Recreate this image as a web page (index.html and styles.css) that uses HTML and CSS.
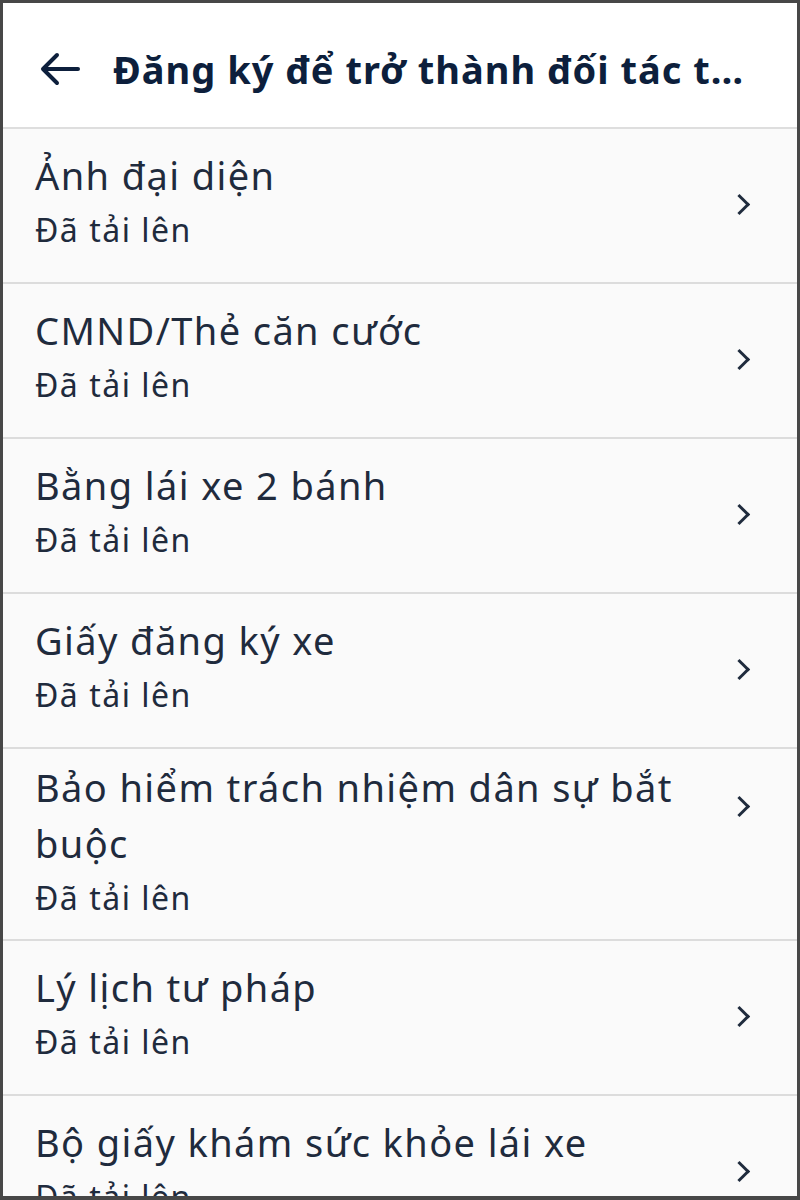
FILE: index.html
```html
<!DOCTYPE html>
<html lang="vi">
<head>
  <meta charset="UTF-8">
  <meta name="viewport" content="width=device-width, initial-scale=1.0">
  <title>Đăng ký đối tác</title>
  <link rel="stylesheet" href="styles.css">
</head>
<body>
  <div class="screen">
    <!-- Top bar -->
    <header class="topbar">
      <svg class="back" width="40" height="34" viewBox="0 0 40 34" fill="none" stroke="#0d1f3c" stroke-width="4" stroke-linecap="round" stroke-linejoin="round">
        <path d="M38 17H4"/>
        <path d="M17 3L3 17l14 14"/>
      </svg>
      <h1 class="title">Đăng ký để trở thành đối tác tài xế</h1>
    </header>

    <!-- Document list -->
    <ul class="doc-list">
      <li class="doc">
        <div class="doc-text">
          <div class="doc-name">Ảnh đại diện</div>
          <div class="doc-status">Đã tải lên</div>
        </div>
        <span class="chevron"></span>
      </li>
      <li class="doc">
        <div class="doc-text">
          <div class="doc-name">CMND/Thẻ căn cước</div>
          <div class="doc-status">Đã tải lên</div>
        </div>
        <span class="chevron"></span>
      </li>
      <li class="doc">
        <div class="doc-text">
          <div class="doc-name">Bằng lái xe 2 bánh</div>
          <div class="doc-status">Đã tải lên</div>
        </div>
        <span class="chevron"></span>
      </li>
      <li class="doc">
        <div class="doc-text">
          <div class="doc-name">Giấy đăng ký xe</div>
          <div class="doc-status">Đã tải lên</div>
        </div>
        <span class="chevron"></span>
      </li>
      <li class="doc doc-long">
        <div class="doc-text">
          <div class="doc-name">Bảo hiểm trách nhiệm dân sự bắt buộc</div>
          <div class="doc-status">Đã tải lên</div>
        </div>
        <span class="chevron"></span>
      </li>
      <li class="doc">
        <div class="doc-text">
          <div class="doc-name">Lý lịch tư pháp</div>
          <div class="doc-status">Đã tải lên</div>
        </div>
        <span class="chevron"></span>
      </li>
      <li class="doc">
        <div class="doc-text">
          <div class="doc-name">Bộ giấy khám sức khỏe lái xe</div>
          <div class="doc-status">Đã tải lên</div>
        </div>
        <span class="chevron"></span>
      </li>
    </ul>
  </div>
</body>
</html>
```

FILE: styles.css
```css
html, body {
  margin: 0;
  padding: 0;
  height: 100%;
  background-color: #474747;
}
body {
  font-family: "Noto Sans", "Open Sans", sans-serif;
  color: #1f2b3d;
}
.screen {
  box-sizing: border-box;
  height: 1200px;
  border-style: solid;
  border-color: #474747;
  border-width: 3px 3px 4px 3px;
  background-color: #fafafa;
  overflow: hidden;
}

/* Top bar */
.topbar {
  display: flex;
  align-items: center;
  gap: 33px;
  box-sizing: border-box;
  height: 126px;
  padding: 8px 45px 0 37px;
  background-color: #fff;
  border-bottom: 2px solid #dedede;
}
.back {
  flex-shrink: 0;
}
.title {
  margin: 0;
  font-size: 38px;
  font-weight: 700;
  color: #0d1f3c;
  white-space: nowrap;
  overflow: hidden;
  text-overflow: ellipsis;
  letter-spacing: 1px;
}

/* Document list */
.doc-list {
  list-style: none;
  margin: 0;
  padding: 0;
}
.doc {
  display: flex;
  align-items: flex-start;
  min-height: 155px;
  box-sizing: border-box;
  padding: 8px 50px 16px 32px;
  border-bottom: 2px solid #dcdcdc;
}
.doc-long {
  padding-top: 10px;
  padding-bottom: 14px;
}
.doc-text {
  flex: 1;
  align-self: center;
  padding-right: 40px;
}
.doc-name {
  font-size: 38px;
  line-height: 56px;
  letter-spacing: 1.4px;
  color: #1f2b3d;
}
.doc-status {
  font-size: 32px;
  line-height: 54px;
  letter-spacing: 1.5px;
  color: #1f2b3d;
}
.chevron {
  flex-shrink: 0;
  width: 12px;
  height: 12px;
  margin-top: 60px;
  border-top: 3px solid #1f2b3d;
  border-right: 3px solid #1f2b3d;
  transform: rotate(45deg);
}
.doc-long .chevron {
  margin-top: 40px;
}
```
